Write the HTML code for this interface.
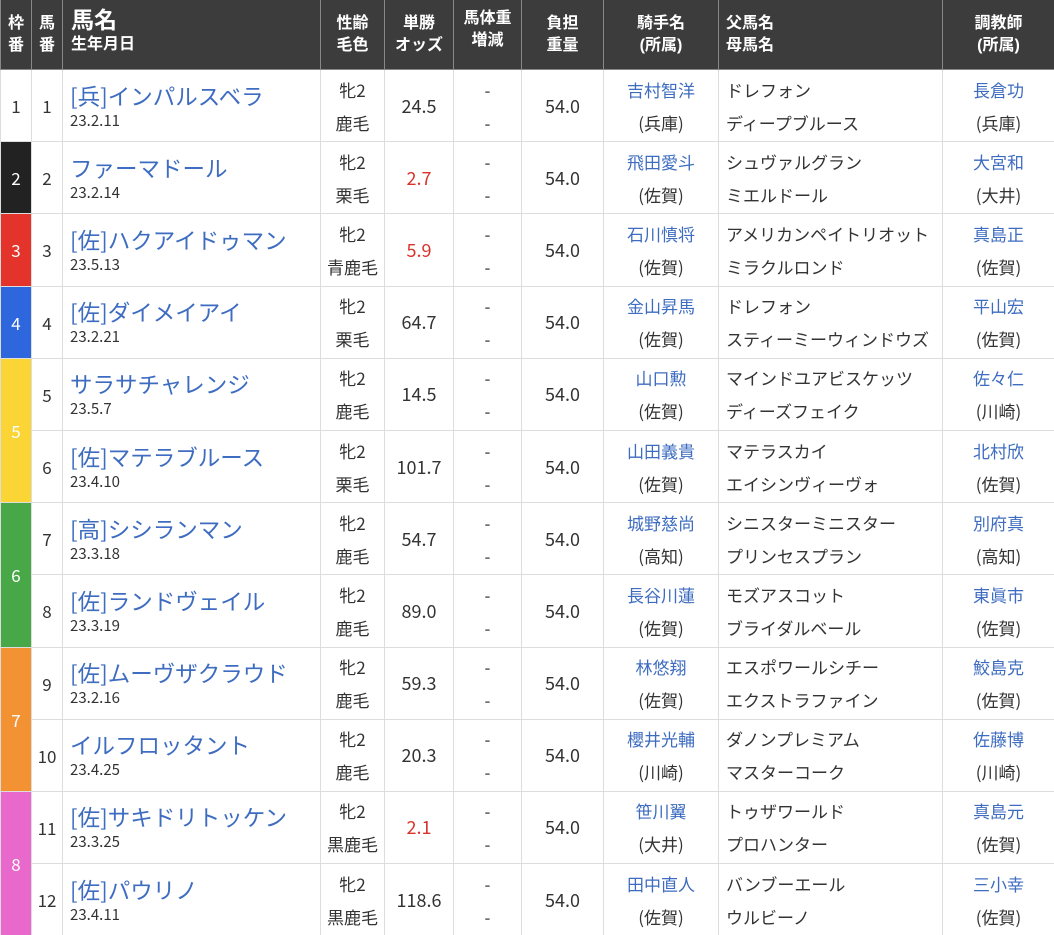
<!DOCTYPE html>
<html><head><meta charset="utf-8"><style>
html,body{margin:0;padding:0;background:#fff;width:1054px;height:935px;overflow:hidden}
body{font-family:"Noto Sans CJK JP",sans-serif;color:#333}
table{border-collapse:collapse;table-layout:fixed;width:1054px}
th{background:#3c3c3c;color:#fff;font-weight:bold;font-size:16px;line-height:22px;height:69px;border:1px solid #888;border-top:none;padding:0;font-family:"Liberation Sans","Noto Sans CJK JP",sans-serif;overflow:hidden}
th div{height:69px;display:flex;flex-direction:column;justify-content:center;overflow:hidden}
td{border:1px solid #ddd;padding:0;height:71.2px;font-size:17px;text-align:center;font-family:"Noto Sans CJK JP",sans-serif}
.n{font-size:18px}
.l{text-align:left;padding-left:7px}
.b{color:#3d6cc0}
.r{color:#d8332b}
.nm{font-size:22.5px;line-height:28px;color:#3d6cc0}
.dt{font-size:15px;line-height:18px;margin-top:2px}
.two div{line-height:33px}
.f{color:#fff;border-color:#ddd}
</style></head><body>
<table>
<colgroup><col style="width:31px"><col style="width:31px"><col style="width:258px"><col style="width:64px"><col style="width:69px"><col style="width:68px"><col style="width:82px"><col style="width:115px"><col style="width:224px"><col style="width:112px"></colgroup>
<tr><th><div>枠<br>番</div></th><th><div>馬<br>番</div></th><th class="l" style="padding-left:8px"><div style="justify-content:flex-start;padding-top:7px;height:62px"><span style="font-size:23px;line-height:27px">馬名</span>生年月日</div></th><th><div>性齢<br>毛色</div></th><th><div>単勝<br>オッズ</div></th><th><div style="justify-content:flex-start;padding-top:8px;height:61px">馬体重<br>増減</div></th><th><div>負担<br>重量</div></th><th><div>騎手名<br>(所属)</div></th><th class="l"><div>父馬名<br>母馬名</div></th><th><div>調教師<br>(所属)</div></th></tr>

<tr><td style="background:#fff">1</td><td>1</td><td class="l"><div class="nm">[兵]インパルスベラ</div><div class="dt">23.2.11</div></td><td class="two"><div>牝2</div><div>鹿毛</div></td><td class="n">24.5</td><td class="two"><div>-</div><div>-</div></td><td class="n">54.0</td><td class="two"><div class="b">吉村智洋</div><div>(兵庫)</div></td><td class="two l"><div>ドレフォン</div><div>ディープブルース</div></td><td class="two"><div class="b">長倉功</div><div>(兵庫)</div></td></tr>

<tr><td class="f" style="background:#222">2</td><td>2</td><td class="l"><div class="nm">ファーマドール</div><div class="dt">23.2.14</div></td><td class="two"><div>牝2</div><div>栗毛</div></td><td class="n r">2.7</td><td class="two"><div>-</div><div>-</div></td><td class="n">54.0</td><td class="two"><div class="b">飛田愛斗</div><div>(佐賀)</div></td><td class="two l"><div>シュヴァルグラン</div><div>ミエルドール</div></td><td class="two"><div class="b">大宮和</div><div>(大井)</div></td></tr>

<tr><td class="f" style="background:#e3332b">3</td><td>3</td><td class="l"><div class="nm">[佐]ハクアイドゥマン</div><div class="dt">23.5.13</div></td><td class="two"><div>牝2</div><div>青鹿毛</div></td><td class="n r">5.9</td><td class="two"><div>-</div><div>-</div></td><td class="n">54.0</td><td class="two"><div class="b">石川慎将</div><div>(佐賀)</div></td><td class="two l"><div>アメリカンペイトリオット</div><div>ミラクルロンド</div></td><td class="two"><div class="b">真島正</div><div>(佐賀)</div></td></tr>

<tr><td class="f" style="background:#2e66dd">4</td><td>4</td><td class="l"><div class="nm">[佐]ダイメイアイ</div><div class="dt">23.2.21</div></td><td class="two"><div>牝2</div><div>栗毛</div></td><td class="n">64.7</td><td class="two"><div>-</div><div>-</div></td><td class="n">54.0</td><td class="two"><div class="b">金山昇馬</div><div>(佐賀)</div></td><td class="two l"><div>ドレフォン</div><div>スティーミーウィンドウズ</div></td><td class="two"><div class="b">平山宏</div><div>(佐賀)</div></td></tr>

<tr><td class="f" rowspan="2" style="background:#fbd436">5</td><td>5</td><td class="l"><div class="nm">サラサチャレンジ</div><div class="dt">23.5.7</div></td><td class="two"><div>牝2</div><div>鹿毛</div></td><td class="n">14.5</td><td class="two"><div>-</div><div>-</div></td><td class="n">54.0</td><td class="two"><div class="b">山口勲</div><div>(佐賀)</div></td><td class="two l"><div>マインドユアビスケッツ</div><div>ディーズフェイク</div></td><td class="two"><div class="b">佐々仁</div><div>(川崎)</div></td></tr>
<tr><td>6</td><td class="l"><div class="nm">[佐]マテラブルース</div><div class="dt">23.4.10</div></td><td class="two"><div>牝2</div><div>栗毛</div></td><td class="n">101.7</td><td class="two"><div>-</div><div>-</div></td><td class="n">54.0</td><td class="two"><div class="b">山田義貴</div><div>(佐賀)</div></td><td class="two l"><div>マテラスカイ</div><div>エイシンヴィーヴォ</div></td><td class="two"><div class="b">北村欣</div><div>(佐賀)</div></td></tr>

<tr><td class="f" rowspan="2" style="background:#48a847">6</td><td>7</td><td class="l"><div class="nm">[高]シシランマン</div><div class="dt">23.3.18</div></td><td class="two"><div>牝2</div><div>鹿毛</div></td><td class="n">54.7</td><td class="two"><div>-</div><div>-</div></td><td class="n">54.0</td><td class="two"><div class="b">城野慈尚</div><div>(高知)</div></td><td class="two l"><div>シニスターミニスター</div><div>プリンセスプラン</div></td><td class="two"><div class="b">別府真</div><div>(高知)</div></td></tr>
<tr><td>8</td><td class="l"><div class="nm">[佐]ランドヴェイル</div><div class="dt">23.3.19</div></td><td class="two"><div>牝2</div><div>鹿毛</div></td><td class="n">89.0</td><td class="two"><div>-</div><div>-</div></td><td class="n">54.0</td><td class="two"><div class="b">長谷川蓮</div><div>(佐賀)</div></td><td class="two l"><div>モズアスコット</div><div>ブライダルベール</div></td><td class="two"><div class="b">東眞市</div><div>(佐賀)</div></td></tr>

<tr><td class="f" rowspan="2" style="background:#f39232">7</td><td>9</td><td class="l"><div class="nm">[佐]ムーヴザクラウド</div><div class="dt">23.2.16</div></td><td class="two"><div>牝2</div><div>鹿毛</div></td><td class="n">59.3</td><td class="two"><div>-</div><div>-</div></td><td class="n">54.0</td><td class="two"><div class="b">林悠翔</div><div>(佐賀)</div></td><td class="two l"><div>エスポワールシチー</div><div>エクストラファイン</div></td><td class="two"><div class="b">鮫島克</div><div>(佐賀)</div></td></tr>
<tr><td>10</td><td class="l"><div class="nm">イルフロッタント</div><div class="dt">23.4.25</div></td><td class="two"><div>牝2</div><div>鹿毛</div></td><td class="n">20.3</td><td class="two"><div>-</div><div>-</div></td><td class="n">54.0</td><td class="two"><div class="b">櫻井光輔</div><div>(川崎)</div></td><td class="two l"><div>ダノンプレミアム</div><div>マスターコーク</div></td><td class="two"><div class="b">佐藤博</div><div>(川崎)</div></td></tr>

<tr><td class="f" rowspan="2" style="background:#e868cc">8</td><td>11</td><td class="l"><div class="nm">[佐]サキドリトッケン</div><div class="dt">23.3.25</div></td><td class="two"><div>牝2</div><div>黒鹿毛</div></td><td class="n r">2.1</td><td class="two"><div>-</div><div>-</div></td><td class="n">54.0</td><td class="two"><div class="b">笹川翼</div><div>(大井)</div></td><td class="two l"><div>トゥザワールド</div><div>プロハンター</div></td><td class="two"><div class="b">真島元</div><div>(佐賀)</div></td></tr>
<tr><td>12</td><td class="l"><div class="nm">[佐]パウリノ</div><div class="dt">23.4.11</div></td><td class="two"><div>牝2</div><div>黒鹿毛</div></td><td class="n">118.6</td><td class="two"><div>-</div><div>-</div></td><td class="n">54.0</td><td class="two"><div class="b">田中直人</div><div>(佐賀)</div></td><td class="two l"><div>バンブーエール</div><div>ウルビーノ</div></td><td class="two"><div class="b">三小幸</div><div>(佐賀)</div></td></tr>
</table>
</body></html>
